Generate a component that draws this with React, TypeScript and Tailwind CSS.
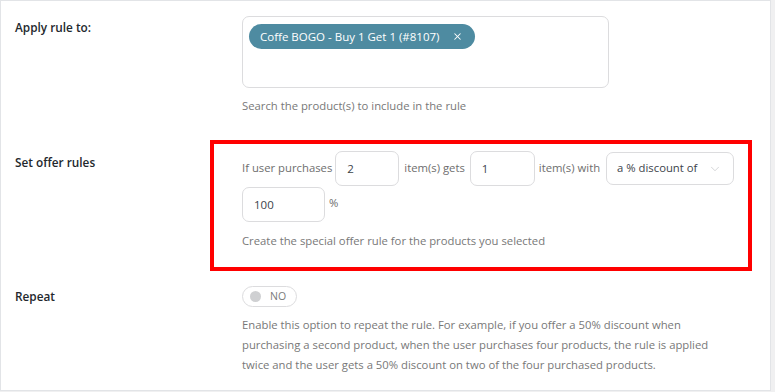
import { ChevronDown, X } from "lucide-react";

const font = { fontFamily: "'Open Sans', 'Noto Sans', sans-serif" };

function Label({ children }: { children: React.ReactNode }) {
  return (
    <div className="w-[241px] shrink-0 pl-[14px] pt-[1px] text-[11.8px] font-semibold leading-5 text-[#23282d]">
      {children}
    </div>
  );
}

function NumberBox({ value, width }: { value: string; width: string }) {
  return (
    <div
      className={`flex h-[35px] ${width} items-center rounded-[7px] border border-[#dcdcde] bg-white pl-[11px] text-[11.5px] text-[#3c434a]`}
    >
      {value}
    </div>
  );
}

export default function App() {
  return (
    <div className="min-h-screen bg-[#f0f0f1]" style={font}>
      <div className="h-[391px] w-[771px] border border-[#e2e4e7] bg-white">
        {/* Apply rule to */}
        <div className="flex pt-[15px]">
          <Label>Apply rule to:</Label>
          <div className="flex flex-col">
            <div className="h-[72px] w-[367px] rounded-[7px] border border-[#dcdcde] px-[6px] pt-[6px]">
              <span className="inline-flex h-[25px] items-center gap-[13px] rounded-full bg-[#4e8ba1] pl-[11px] pr-[12px] text-[11.5px] text-white">
                Coffe BOGO - Buy 1 Get 1 (#8107)
                <X size={11} strokeWidth={2.2} />
              </span>
            </div>
            <p className="mt-[8px] text-[11.3px] leading-5 text-[#787878]">
              Search the product(s) to include in the rule
            </p>
          </div>
        </div>

        {/* Set offer rules */}
        <div className="mt-[35px] flex">
          <Label>Set offer rules</Label>
          <div className="relative flex flex-col">
            <div className="pointer-events-none absolute -left-[32px] -top-[11px] h-[131px] w-[542px] border-4 border-[#ff0000]" />
            <div className="flex items-center text-[11.3px] text-[#6e6e6e]">
              <span className="mr-[3px]">If user purchases</span>
              <NumberBox value="2" width="w-[64px]" />
              <span className="ml-[5px] mr-[5px]">item(s) gets</span>
              <NumberBox value="1" width="w-[65px]" />
              <span className="ml-[4px] mr-[6px]">item(s) with</span>
              <div className="flex h-[33px] w-[128px] items-center justify-between rounded-[7px] border border-[#dcdcde] pl-[10px] pr-[11px] text-[11.3px] text-[#3c434a]">
                a % discount of
                <ChevronDown size={14} strokeWidth={1.2} className="text-[#c3c4c7]" />
              </div>
            </div>
            <div className="mt-[1px] flex items-center gap-[4px] text-[11.3px] text-[#6e6e6e]">
              <NumberBox value="100" width="w-[83px]" />
              <span className="-mt-[2px]">%</span>
            </div>
            <p className="mt-[9px] text-[11.3px] leading-5 text-[#787878]">
              Create the special offer rule for the products you selected
            </p>
          </div>
        </div>

        {/* Repeat */}
        <div className="mt-[34px] flex">
          <Label>Repeat</Label>
          <div className="flex flex-col">
            <div className="mt-[1px] flex h-[21px] w-[55px] items-center gap-[9px] rounded-full border border-[#dcdcde] pl-[7px]">
              <span className="h-[11px] w-[11px] rounded-full bg-[#cfd0d2]" />
              <span className="text-[10.5px] text-[#7a7a7a]">NO</span>
            </div>
            <p className="mt-[8px] text-[11.3px] leading-5 text-[#787878]">
              <span className="block whitespace-nowrap">
                Enable this option to repeat the rule. For example, if you offer a 50% discount when
              </span>
              <span className="block whitespace-nowrap">
                purchasing a second product, when the user purchases four products, the rule is applied
              </span>
              <span className="block whitespace-nowrap">
                twice and the user gets a 50% discount on two of the four purchased products.
              </span>
            </p>
          </div>
        </div>
      </div>
    </div>
  );
}
